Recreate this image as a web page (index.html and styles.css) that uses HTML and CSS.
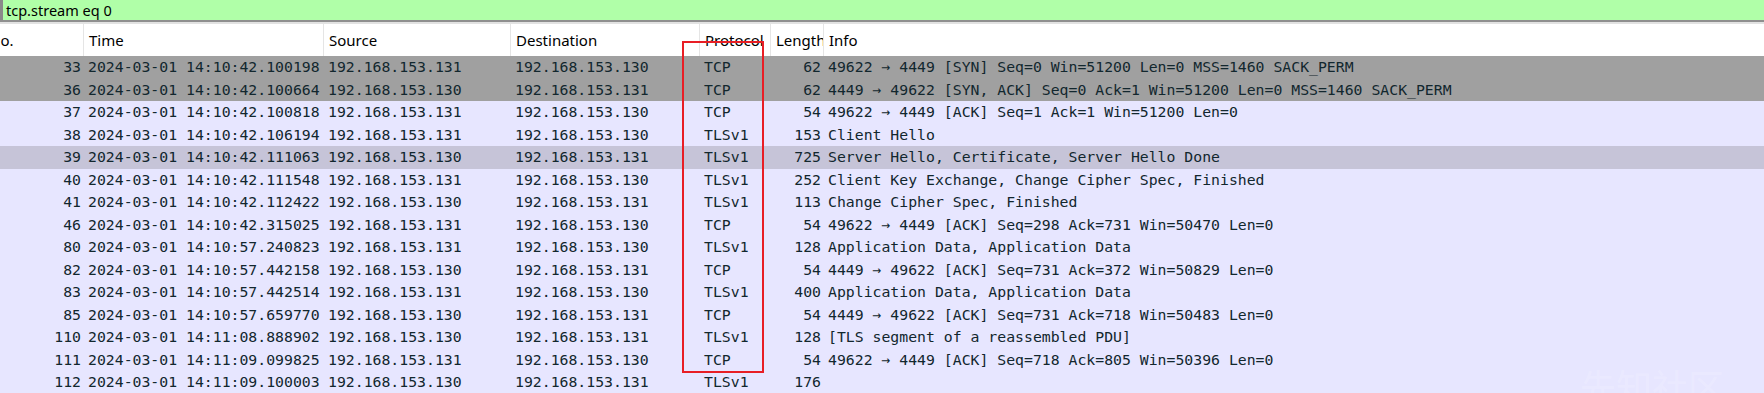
FILE: index.html
```html
<!DOCTYPE html>
<html>
<head>
<meta charset="utf-8">
<link rel="stylesheet" href="styles.css">
</head>
<body>
<div class="filter">tcp.stream eq 0</div>
<div class="divider"></div>
<div class="view">
  <div class="list">
    <div class="row head">
      <div class="h">No.</div><div class="h">Time</div><div class="h">Source</div><div class="h">Destination</div><div class="h">Protocol</div><div class="h">Length</div><div class="h last">Info</div>
    </div>
    <div class="row syn"><div class="c r">33</div><div class="c">2024-03-01 14:10:42.100198</div><div class="c">192.168.153.131</div><div class="c">192.168.153.130</div><div class="c">TCP</div><div class="c r">62</div><div class="c">49622 → 4449 [SYN] Seq=0 Win=51200 Len=0 MSS=1460 SACK_PERM</div></div>
    <div class="row syn"><div class="c r">36</div><div class="c">2024-03-01 14:10:42.100664</div><div class="c">192.168.153.130</div><div class="c">192.168.153.131</div><div class="c">TCP</div><div class="c r">62</div><div class="c">4449 → 49622 [SYN, ACK] Seq=0 Ack=1 Win=51200 Len=0 MSS=1460 SACK_PERM</div></div>
    <div class="row"><div class="c r">37</div><div class="c">2024-03-01 14:10:42.100818</div><div class="c">192.168.153.131</div><div class="c">192.168.153.130</div><div class="c">TCP</div><div class="c r">54</div><div class="c">49622 → 4449 [ACK] Seq=1 Ack=1 Win=51200 Len=0</div></div>
    <div class="row"><div class="c r">38</div><div class="c">2024-03-01 14:10:42.106194</div><div class="c">192.168.153.131</div><div class="c">192.168.153.130</div><div class="c">TLSv1</div><div class="c r">153</div><div class="c">Client Hello</div></div>
    <div class="row hover"><div class="c r">39</div><div class="c">2024-03-01 14:10:42.111063</div><div class="c">192.168.153.130</div><div class="c">192.168.153.131</div><div class="c">TLSv1</div><div class="c r">725</div><div class="c">Server Hello, Certificate, Server Hello Done</div></div>
    <div class="row"><div class="c r">40</div><div class="c">2024-03-01 14:10:42.111548</div><div class="c">192.168.153.131</div><div class="c">192.168.153.130</div><div class="c">TLSv1</div><div class="c r">252</div><div class="c">Client Key Exchange, Change Cipher Spec, Finished</div></div>
    <div class="row"><div class="c r">41</div><div class="c">2024-03-01 14:10:42.112422</div><div class="c">192.168.153.130</div><div class="c">192.168.153.131</div><div class="c">TLSv1</div><div class="c r">113</div><div class="c">Change Cipher Spec, Finished</div></div>
    <div class="row"><div class="c r">46</div><div class="c">2024-03-01 14:10:42.315025</div><div class="c">192.168.153.131</div><div class="c">192.168.153.130</div><div class="c">TCP</div><div class="c r">54</div><div class="c">49622 → 4449 [ACK] Seq=298 Ack=731 Win=50470 Len=0</div></div>
    <div class="row"><div class="c r">80</div><div class="c">2024-03-01 14:10:57.240823</div><div class="c">192.168.153.131</div><div class="c">192.168.153.130</div><div class="c">TLSv1</div><div class="c r">128</div><div class="c">Application Data, Application Data</div></div>
    <div class="row"><div class="c r">82</div><div class="c">2024-03-01 14:10:57.442158</div><div class="c">192.168.153.130</div><div class="c">192.168.153.131</div><div class="c">TCP</div><div class="c r">54</div><div class="c">4449 → 49622 [ACK] Seq=731 Ack=372 Win=50829 Len=0</div></div>
    <div class="row"><div class="c r">83</div><div class="c">2024-03-01 14:10:57.442514</div><div class="c">192.168.153.131</div><div class="c">192.168.153.130</div><div class="c">TLSv1</div><div class="c r">400</div><div class="c">Application Data, Application Data</div></div>
    <div class="row"><div class="c r">85</div><div class="c">2024-03-01 14:10:57.659770</div><div class="c">192.168.153.130</div><div class="c">192.168.153.131</div><div class="c">TCP</div><div class="c r">54</div><div class="c">4449 → 49622 [ACK] Seq=731 Ack=718 Win=50483 Len=0</div></div>
    <div class="row"><div class="c r">110</div><div class="c">2024-03-01 14:11:08.888902</div><div class="c">192.168.153.130</div><div class="c">192.168.153.131</div><div class="c">TLSv1</div><div class="c r">128</div><div class="c">[TLS segment of a reassembled PDU]</div></div>
    <div class="row"><div class="c r">111</div><div class="c">2024-03-01 14:11:09.099825</div><div class="c">192.168.153.131</div><div class="c">192.168.153.130</div><div class="c">TCP</div><div class="c r">54</div><div class="c">49622 → 4449 [ACK] Seq=718 Ack=805 Win=50396 Len=0</div></div>
    <div class="row"><div class="c r">112</div><div class="c">2024-03-01 14:11:09.100003</div><div class="c">192.168.153.130</div><div class="c">192.168.153.131</div><div class="c">TLSv1</div><div class="c r">176</div><div class="c"></div></div>
  </div>
  <div class="redbox"></div>
  <div class="watermark">先知社区</div>
</div>
</body>
</html>
```

FILE: styles.css
```css
html, body {
  margin: 0;
  padding: 0;
  background: #e7e6ff;
  overflow: hidden;
}
body {
  width: 1764px;
  height: 393px;
  font-family: "Noto Sans", "Liberation Sans", sans-serif;
}
.filter {
  height: 20px;
  line-height: 20px;
  background: #b0ffa8;
  border-left: 3px solid #8a8a8a;
  padding-left: 3px;
  font-size: 14.5px;
  color: #000;
  white-space: nowrap;
  overflow: hidden;
}
.divider {
  height: 2px;
  background: #8f8f8f;
  border-bottom: 2px solid #e2e2e2;
}
.view {
  position: relative;
  overflow: hidden;
  height: 369px;
}
.list {
  margin-left: -16px;
}
.row {
  display: grid;
  grid-template-columns: 100px 240px 187px 189px 71px 53px 1fr;
  height: 22.5px;
  background: #e7e6ff;
}
.row.syn {
  background: #a0a0a0;
}
.row.hover {
  background: #c6c4d8;
}
.row.head {
  height: 32px;
  background: #fff;
}
.h {
  font-size: 15px;
  line-height: 32px;
  padding-left: 5px;
  color: #000;
  white-space: nowrap;
  overflow: hidden;
  border-right: 1px solid #e5e5e5;
}
.h.last {
  border-right: none;
}
.c {
  font-family: "DejaVu Sans Mono", "Liberation Mono", monospace;
  font-size: 14.8px;
  line-height: 22.5px;
  color: #12272e;
  padding: 0 3px 0 4px;
  white-space: nowrap;
  overflow: hidden;
}
.c.r {
  text-align: right;
}
.redbox {
  position: absolute;
  left: 682px;
  top: 17px;
  width: 82px;
  height: 332px;
  box-sizing: border-box;
  border: 2px solid #e81e25;
}
.watermark {
  position: absolute;
  left: 1580px;
  top: 335px;
  font-family: "Noto Sans CJK SC", sans-serif;
  font-size: 36px;
  color: rgba(255, 255, 255, 0.18);
  white-space: nowrap;
}
```
